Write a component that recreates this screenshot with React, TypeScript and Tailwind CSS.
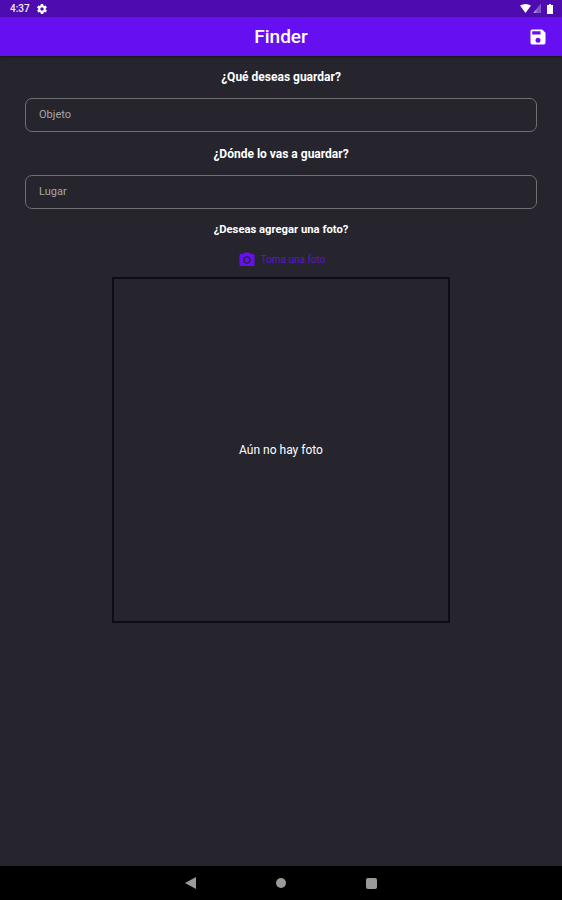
function SectionLabel({ children, className }: { children: string; className: string }) {
  return <p className={`text-center leading-[16px] font-bold text-white ${className}`}>{children}</p>;
}

function Field({ label }: { label: string }) {
  return (
    <div className="mx-[25px] h-[34px] rounded-[7px] border border-[#6e6e75] bg-[#26252e] pl-[13px] flex items-center">
      <span className="text-[11px] text-[#a5a5aa]">{label}</span>
    </div>
  );
}

export default function App() {
  return (
    <div className="w-[562px] h-[900px] flex flex-col bg-[#26252e] font-['Roboto',sans-serif] overflow-hidden">
      <div className="h-[17px] bg-[#4e0cb0] flex items-center justify-between pl-[10px] pr-[9px] shrink-0">
        <div className="flex items-center gap-[6px]">
          <span className="text-[10px] leading-none font-medium text-[#eee]">4:37</span>
          <svg width="12" height="12" viewBox="0 0 24 24" fill="#fff">
            <path d="M19.4 13a7.5 7.5 0 0 0 0-2l2.1-1.6a.5.5 0 0 0 .1-.6l-2-3.5a.5.5 0 0 0-.6-.2l-2.5 1a7 7 0 0 0-1.7-1l-.4-2.6a.5.5 0 0 0-.5-.5h-4a.5.5 0 0 0-.5.4l-.4 2.7a7 7 0 0 0-1.7 1l-2.5-1a.5.5 0 0 0-.6.2l-2 3.5a.5.5 0 0 0 .1.6L4.6 11a7.5 7.5 0 0 0 0 2l-2.1 1.6a.5.5 0 0 0-.1.6l2 3.5c.1.2.4.3.6.2l2.5-1a7 7 0 0 0 1.7 1l.4 2.6c0 .3.2.5.5.5h4c.3 0 .5-.2.5-.4l.4-2.7a7 7 0 0 0 1.7-1l2.5 1c.2.1.5 0 .6-.2l2-3.5a.5.5 0 0 0-.1-.6zM12 15.5a3.5 3.5 0 1 1 0-7 3.5 3.5 0 0 1 0 7z" />
          </svg>
        </div>
        <div className="flex items-center gap-[2px]">
          <svg width="11" height="9" viewBox="0 0 11 9" fill="#fff"><path d="M0 1.5Q5.5-1.5 11 1.5L5.5 9z" /></svg>
          <svg width="8" height="9" viewBox="0 0 8 9"><path d="M8 0V9H0z" fill="#a98ad8" /><path d="M3.5 5.5V9H8V0z" fill="#7d54c4" /></svg>
          <svg width="6" height="10" viewBox="0 0 6 10" fill="#fff" className="ml-[4px]"><path d="M2 0h2v1h2v9H0V1h2z" /></svg>
        </div>
      </div>

      <header className="relative h-[39px] bg-[#6610f2] flex items-center justify-center shrink-0 shadow-[0_1px_2px_rgba(0,0,0,0.5)]">
        <h1 className="text-[19px] leading-none font-medium text-white">Finder</h1>
        <svg width="20" height="20" viewBox="0 0 24 24" fill="#fff" className="absolute right-[14px] top-[10px]">
          <path d="M17 3H5a2 2 0 0 0-2 2v14a2 2 0 0 0 2 2h14a2 2 0 0 0 2-2V7l-4-4zm-5 16a3 3 0 1 1 0-6 3 3 0 0 1 0 6zm3-10H5V5h10v4z" />
        </svg>
      </header>

      <main className="flex-1 flex flex-col">
        <SectionLabel className="text-[12px] mt-[13px] mb-[13px]">¿Qué deseas guardar?</SectionLabel>
        <Field label="Objeto" />
        <SectionLabel className="text-[12px] mt-[14px] mb-[13px]">¿Dónde lo vas a guardar?</SectionLabel>
        <Field label="Lugar" />
        <SectionLabel className="text-[11.25px] mt-[13px] mb-[14px]">¿Deseas agregar una foto?</SectionLabel>
        <div className="flex items-center justify-center gap-[5px] h-[16px] pl-[1px]">
          <svg width="18" height="18" viewBox="0 0 24 24" fill="#6610f2" className="shrink-0">
            <path d="M9 2 7.17 4H4a2 2 0 0 0-2 2v12a2 2 0 0 0 2 2h16a2 2 0 0 0 2-2V6a2 2 0 0 0-2-2h-3.17L15 2H9zm3 15a5 5 0 1 1 0-10 5 5 0 0 1 0 10z" />
            <circle cx="12" cy="12" r="3.2" />
          </svg>
          <span className="text-[10px] leading-none font-normal text-[#5f12d0]">Toma una foto</span>
        </div>
        <div className="mx-auto mt-[9px] w-[338px] h-[346px] border-2 border-[#0d0d15] flex items-center justify-center">
          <span className="text-[12px] text-white">Aún no hay foto</span>
        </div>
      </main>

      <nav className="h-[34px] bg-black flex items-center justify-center shrink-0 gap-[80px]">
        <svg width="11" height="12" viewBox="0 0 11 12" fill="#9a9a9a"><path d="M11 0V12L0 6z" /></svg>
        <span className="w-[10px] h-[10px] rounded-full bg-[#9a9a9a]" />
        <span className="w-[11px] h-[11px] rounded-[2px] bg-[#9a9a9a]" />
      </nav>
    </div>
  );
}
